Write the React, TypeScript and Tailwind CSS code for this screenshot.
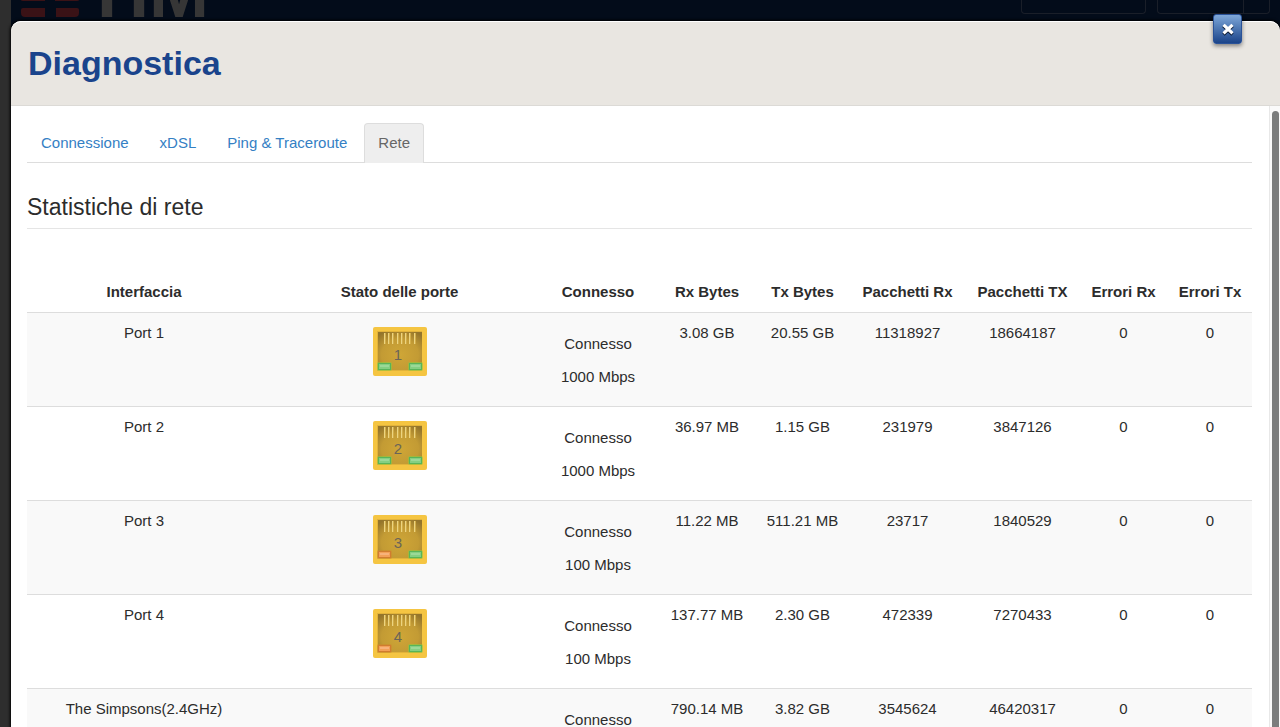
import React from 'react';

interface PortRow {
    name: string;
    port?: number;
    speed: string;
    leftLed?: 'green' | 'orange';
    rxBytes: string;
    txBytes: string;
    rxPackets: string;
    txPackets: string;
    rxErrors: number;
    txErrors: number;
}

const rows: PortRow[] = [
    { name: 'Port 1', port: 1, speed: '1000 Mbps', leftLed: 'green', rxBytes: '3.08 GB', txBytes: '20.55 GB', rxPackets: '11318927', txPackets: '18664187', rxErrors: 0, txErrors: 0 },
    { name: 'Port 2', port: 2, speed: '1000 Mbps', leftLed: 'green', rxBytes: '36.97 MB', txBytes: '1.15 GB', rxPackets: '231979', txPackets: '3847126', rxErrors: 0, txErrors: 0 },
    { name: 'Port 3', port: 3, speed: '100 Mbps', leftLed: 'orange', rxBytes: '11.22 MB', txBytes: '511.21 MB', rxPackets: '23717', txPackets: '1840529', rxErrors: 0, txErrors: 0 },
    { name: 'Port 4', port: 4, speed: '100 Mbps', leftLed: 'orange', rxBytes: '137.77 MB', txBytes: '2.30 GB', rxPackets: '472339', txPackets: '7270433', rxErrors: 0, txErrors: 0 },
    { name: 'The Simpsons(2.4GHz)', speed: '', rxBytes: '790.14 MB', txBytes: '3.82 GB', rxPackets: '3545624', txPackets: '46420317', rxErrors: 0, txErrors: 0 },
];

const headers = ['Interfaccia', 'Stato delle porte', 'Connesso', 'Rx Bytes', 'Tx Bytes', 'Pacchetti Rx', 'Pacchetti TX', 'Errori Rx', 'Errori Tx'];

const tabs = ['Connessione', 'xDSL', 'Ping & Traceroute', 'Rete'];

const Led: React.FC<{ x: number; color: 'green' | 'orange' }> = ({ x, color }) => {
    const green = color === 'green';
    return (
        <g>
            <rect x={x - 1} y="35" width="15" height="9" rx="2" fill={green ? '#8fc83f' : '#cf8a2c'} opacity="0.6" />
            <rect x={x + 0.5} y="36.5" width="12" height="6" fill={green ? '#84cf82' : '#f2a058'} stroke={green ? '#58b45a' : '#d07c30'} />
            <rect x={x + 2} y="38" width="9" height="2" fill={green ? '#9bd998' : '#f7b27a'} />
        </g>
    );
};

const PortIcon: React.FC<{ port: number; leftLed: 'green' | 'orange' }> = ({ port, leftLed }) => (
    <svg width="54" height="49" viewBox="0 0 54 49" className="mx-auto block" role="img" aria-label={`Port ${port}`}>
        <defs>
            <radialGradient id={`inner${port}`} cx="50%" cy="60%" r="70%">
                <stop offset="0" stopColor="#cfa637" />
                <stop offset="0.6" stopColor="#c39b34" />
                <stop offset="1" stopColor="#94752b" />
            </radialGradient>
        </defs>
        <rect width="54" height="49" rx="2" fill="#f5c542" />
        <rect x="4" y="4" width="45" height="40" fill="#e2b33a" />
        <rect x="5" y="5" width="44" height="38" fill={`url(#inner${port})`} />
        {[11, 15, 19, 24, 28, 32, 36, 41].map((x) => (
            <g key={x}>
                <rect x={x} y="6" width="1" height="11" fill="#ecd480" />
                <rect x={x + 1} y="6" width="1" height="11" fill="#d2ad48" />
            </g>
        ))}
        <text x="25" y="33" textAnchor="middle" fontSize="15" fill="#6b6558">{port}</text>
        <Led x={5} color={leftLed} />
        <Led x={36} color="green" />
    </svg>
);

const RouterHeader: React.FC = () => (
    <header className="ml-[11px] flex h-[60px] items-start justify-between overflow-hidden bg-[#030c1a] pr-[10px]">
        <div className="flex pl-[10px]">
            <svg width="60" height="18" viewBox="0 0 60 18" aria-hidden="true">
                <path d="M0 0H24V1H2Q0 1 0 0ZM34 0H58Q58 1 56 1H34Z" fill="#3a1216" />
                <path d="M2 8H24V17H4Q0 17 0 13V10Q0 8 2 8ZM35 8H56Q58 8 58 10V13Q58 17 54 17H35Z" fill="#3a1216" />
            </svg>
            <span className="-mt-[38px] ml-[4px] h-[60px] text-[72px] leading-[60px] font-bold text-[#363636]">TIM</span>
        </div>
        <div className="flex gap-[11px]">
            <div className="h-[14px] w-[125px] rounded-b-[4px] border border-t-0 border-[#1a1f29]" />
            <div className="flex h-[14px] w-[113px] rounded-b-[4px] border border-t-0 border-[#1a1f29]">
                <div className="w-[86px] border-r border-[#1a1f29]" />
            </div>
        </div>
    </header>
);

const StatsTable: React.FC = () => (
    <table className="w-full table-fixed border-separate border-spacing-0 text-center leading-[22px]">
        <colgroup>
            <col className="w-[234px]" />
            <col className="w-[277px]" />
            <col className="w-[120px]" />
            <col className="w-[98px]" />
            <col className="w-[93px]" />
            <col className="w-[117px]" />
            <col className="w-[113px]" />
            <col className="w-[89px]" />
            <col className="w-[84px]" />
        </colgroup>
        <thead>
            <tr>
                {headers.map((h) => (
                    <th key={h} scope="col" className="pt-2 pb-[9px] font-bold whitespace-nowrap">{h}</th>
                ))}
            </tr>
        </thead>
        <tbody>
            {rows.map((row) => (
                <tr key={row.name} className="align-top odd:bg-[#f9f9f9] [&>td]:border-t [&>td]:border-[#dddddd] [&>td]:pt-[9px] [&>td]:pb-[7px]">
                    <td>{row.name}</td>
                    <td>
                        {row.port && row.leftLed && (
                            <div className="pt-[5px]">
                                <PortIcon port={row.port} leftLed={row.leftLed} />
                            </div>
                        )}
                    </td>
                    <td>
                        <p className="my-[11px]">Connesso</p>
                        <p className="mb-[11px]">{row.speed}</p>
                    </td>
                    <td>{row.rxBytes}</td>
                    <td>{row.txBytes}</td>
                    <td>{row.rxPackets}</td>
                    <td>{row.txPackets}</td>
                    <td>{row.rxErrors}</td>
                    <td>{row.txErrors}</td>
                </tr>
            ))}
        </tbody>
    </table>
);

export default function App() {
    return (
        <div className="relative h-screen overflow-hidden bg-[#2e2e2e] font-['Liberation_Sans',Arial,sans-serif] text-[15px] text-[#2c2c2c]">
            <RouterHeader />

            <div role="dialog" aria-labelledby="dialog-title" className="absolute top-[21px] right-0 bottom-0 left-[11px] flex flex-col rounded-t-[10px] bg-white shadow-[0_0_3px_1px_#000000]">
                <div className="flex h-[85px] shrink-0 items-center rounded-t-[10px] border-t border-b border-t-white border-b-[#dcdad6] bg-[#e9e6e1] px-[17px] pb-[2px]">
                    <h1 id="dialog-title" className="text-[34px] leading-[40px] font-bold text-[#1a448c]">Diagnostica</h1>
                </div>
                <button
                    type="button"
                    aria-label="Chiudi"
                    className="absolute -top-[7px] right-[38px] flex h-[30px] w-[29px] items-center justify-center rounded-[3px] border border-[#2a5298] bg-linear-to-b from-[#7fa8d9] to-[#1b4489] shadow-[0_2px_4px_rgba(0,0,0,0.45)]"
                >
                    <svg width="12" height="13" viewBox="0 0 12 13" aria-hidden="true">
                        <path d="M2.7 4L9.3 10.2M9.3 4L2.7 10.2" stroke="#0b1a33" strokeWidth="3.6" strokeLinecap="square" />
                        <path d="M2.7 3L9.3 9.2M9.3 3L2.7 9.2" stroke="#ffffff" strokeWidth="3.2" strokeLinecap="square" />
                    </svg>
                </button>

                <div className="flex min-h-0 flex-1">
                    <div className="min-w-0 flex-1 overflow-hidden pt-[17px] pr-[17px] pl-4">
                        <nav className="flex gap-[3px] border-b border-[#dddddd] leading-[22px]">
                            {tabs.map((tab) => (
                                <a
                                    key={tab}
                                    href="#"
                                    className={
                                        tab === 'Rete'
                                            ? '-mb-px rounded-t-[4px] border border-b-0 border-[#dddddd] bg-[#eeeeee] px-[13px] pt-2 pb-[9px] whitespace-nowrap text-[#666666]'
                                            : 'border border-b-0 border-transparent px-[13px] pt-2 pb-2 whitespace-nowrap text-[#3480c4]'
                                    }
                                >
                                    {tab}
                                </a>
                            ))}
                        </nav>
                        <h2 className="mt-[30px] mb-[44px] border-b border-[#e5e5e5] pb-[7px] text-[23px] leading-[28px]">Statistiche di rete</h2>
                        <StatsTable />
                    </div>
                    <div className="w-[11px] shrink-0 border-l border-[#e8e8e8] bg-[#fafafa] pt-[5px] pl-[2px]">
                        <div className="h-full w-[7px] rounded-t-full bg-[#7b7d7d]" />
                    </div>
                </div>
            </div>
        </div>
    );
}
